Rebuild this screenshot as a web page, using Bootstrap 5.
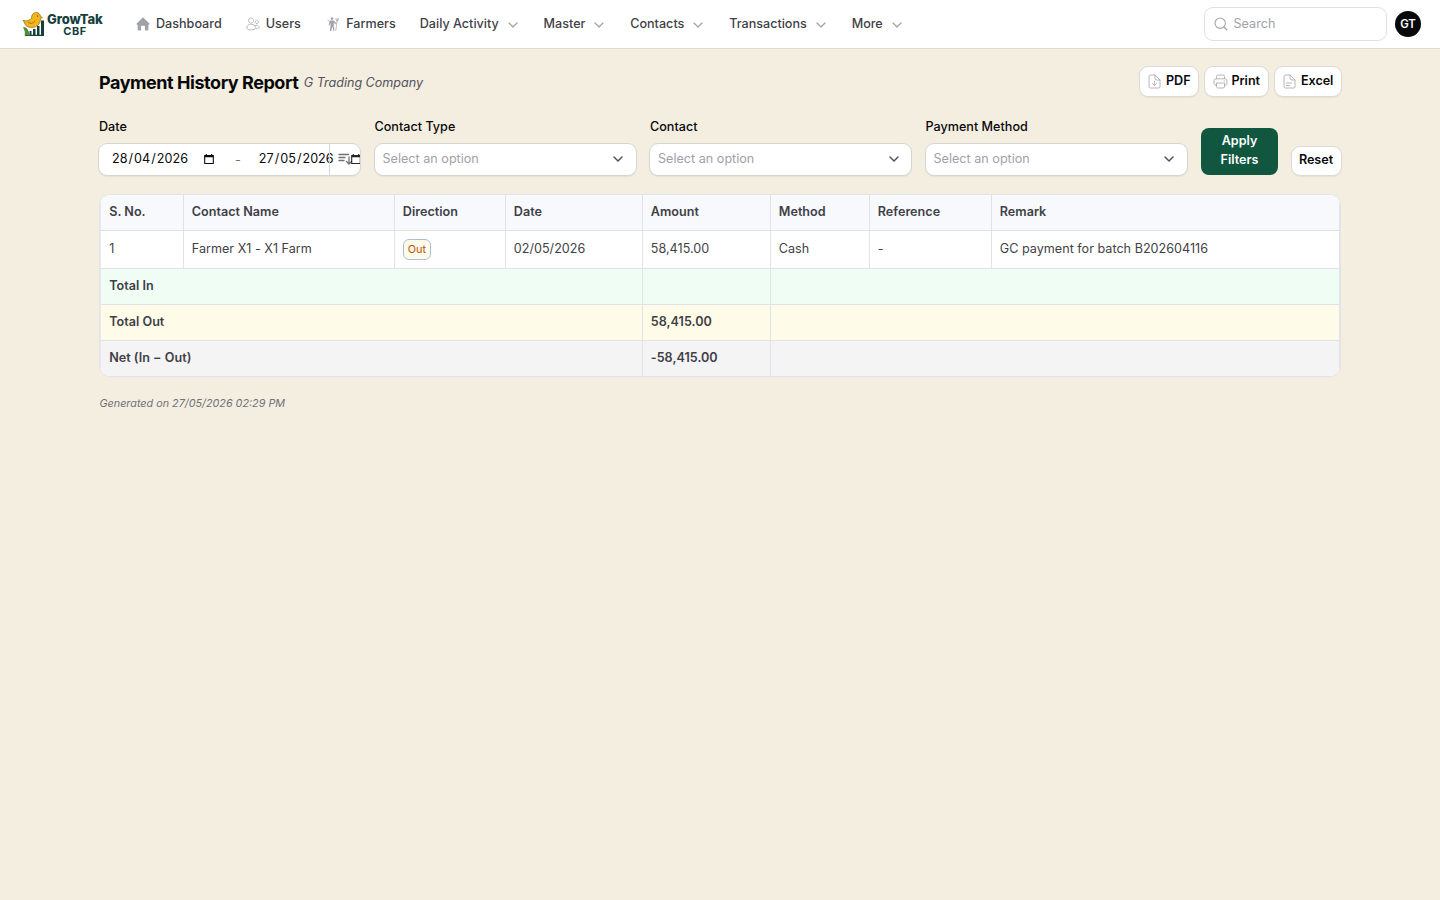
<!DOCTYPE html>
<html lang="en">
<head>
<meta charset="utf-8">
<meta name="viewport" content="width=device-width, initial-scale=1">
<title>Payment History Report</title>
<link href="https://cdn.jsdelivr.net/npm/bootstrap@5.3.0/dist/css/bootstrap.min.css" rel="stylesheet">
<style>
body{background:#f4eee0;font-family:Inter,"Liberation Sans",sans-serif;font-size:12.6px;line-height:18px;letter-spacing:.01px;color:#09090b}
svg{display:block;flex:none;fill:none;stroke:currentColor;stroke-width:1.5;stroke-linecap:round;stroke-linejoin:round}
.topbar{height:49px;background:#fff;border-bottom:1px solid #dfdbd0;padding:0 19px 0 22px}
.logo-mark{width:24px;height:28px;stroke:none}
.wordmark{color:#173f3e;font-weight:800;font-size:13px;line-height:13px;letter-spacing:-.12px;width:56px;margin:1px 0 0 1px}
.wordmark span{display:block;font-size:11px;line-height:11px;font-weight:700;letter-spacing:.5px;text-align:center}
.menu{margin-left:33px;gap:24px;color:#3f3f46;font-weight:500;letter-spacing:0}
.menu a{color:inherit;text-decoration:none;gap:6px;white-space:nowrap}
.menu svg{color:#a1a1aa}
.menu .drop{stroke-width:1.2;margin:1px 0 0 .8px}
.searchbox{width:183px;height:34px;border:1px solid #e1e1e4;border-radius:9px;padding:0 9px;gap:5.5px;color:#a1a1aa}
.avatar{width:26px;height:26px;background:#09090b;color:#fff;font-size:11.4px;font-weight:600;letter-spacing:0}
.page{width:1243px;margin:0 0 0 99px;padding-top:17px}
h1{font-size:18px;line-height:24px;font-weight:700;letter-spacing:-.45px}
.heading{padding-top:2px}
.company{color:#52525b;font-style:italic;letter-spacing:-.03px}
.tool{height:31px;border:1px solid #dcdad3;border-radius:9px;background:#fff;color:#09090b;font-size:12.6px;font-weight:600;line-height:18px;padding:0 7.6px 1px 7.5px;gap:3.8px;letter-spacing:-.02px;box-shadow:0 1px 1px #0000000d}
.tool svg{color:#a1a1aa}
.filters{margin:21px 0 0 -1px;gap:12.5px}
.field{width:263px}
.field label{font-weight:500;margin:0 0 7px 1px;display:block;line-height:18px}
.box{height:33px;border:1px solid #d6d6d0;border-radius:9px;background:#fff;box-shadow:0 1px 1px #0000000d}
.box>span{padding-bottom:2px}
.pick{padding:0 10.500px 0 8px;color:#a1a1aa}
.pick svg{color:#52525b;margin-bottom:1px}
.dates{overflow:hidden;padding-left:13px;position:relative}
.dates .day{width:77px;letter-spacing:.02px;white-space:nowrap}
.dates i{font-style:normal;padding:0 1px}
.sorter{position:absolute;right:0;top:0;bottom:0;width:31px;border-left:1px solid #d6d6d8;padding:0 0 2px 8px;color:#71717a}
.apply{width:77px;height:47px;border:0;border-radius:8px;background:#115740;color:#fff;font-weight:600;font-size:12.6px;line-height:19px;padding:0 0 3px;margin:0 0 1px 1px;letter-spacing:0}
.reset{width:51px;height:30px;padding:0 0 2px}
.report{margin:18px 0 0;width:1242px;border:1px solid #e2e4e8;border-radius:11px;overflow:hidden;background:#fff}
.report table{width:1240px;table-layout:fixed;border-collapse:separate;border-spacing:0;color:#3f3f46;margin:0}
.report td,.report th{height:36px;padding:0 8px 1px 7.8px;border-right:1px solid #dfe2e7;border-bottom:1px solid #dfe2e7}
.report th:first-child,.report td:first-child{padding-left:8.2px;border-left:1px solid #e6e8ec}
.report th,.sum td{font-weight:600}
.report tbody tr:last-child td{border-bottom:0;height:35px}
.report thead th{background:#f8f9fc}
.out{display:inline-block;font-size:10.8px;line-height:19px;height:21px;border:1px solid #a9bfdb;border-radius:6px;background:#fffbeb;color:#b45309;padding:0 4px;vertical-align:middle;letter-spacing:0}
.stamp{font-size:10.8px;color:#71717a;font-style:italic;margin:18px 0 0 .5px;letter-spacing:0}
</style>
</head>
<body>
<svg width="0" height="0" class="position-absolute"><defs>
<symbol id="down" viewBox="0 0 14 14"><path d="M3 5l4 4 4-4"/></symbol>
<symbol id="cal" viewBox="0 0 12 12"><path d="M1.700 2.500h8.600v8H1.700zM3.300 1v1M8.700 1v1" stroke-width="1.100" stroke-linecap="butt"/><path d="M1.700 3.200h8.600" stroke-width="2" stroke-linecap="butt"/></symbol>
</defs></svg>
<nav class="topbar d-flex align-items-center">
  <svg class="logo-mark" viewBox="0 0 24 28">
    <path fill="#173f3e" d="M7.500 21h2v4.500h-2zM11 19h2.500v6.500H11zM15 16h2.500v9.500H15zM19 10.500h3v15h-3zM3 24.800h19v1.200H3z"/><path fill="#4b8c3e" d="M1 17c4 0 6 3 6.500 8.500H2.500c1-3 0-5.500-1.500-8.500z"/>
    <path fill="#f3b51c" stroke="#8a6817" stroke-width=".7" d="M1.500 10.500c3 1 5.500 0 8-2 0-4 2-6 5-6 2 0 4 2 4 4l2 1-2 1c0 6-4 9-9 9-5 0-7-3-8-7z"/>
    <path stroke="#8a6817" stroke-width=".8" d="M6 12c2 2 5 2 7-1"/><circle cx="15.500" cy="6" r=".6" fill="#222"/>
  </svg>
  <div class="wordmark">GrowTak<span>CBF</span></div>
  <div class="menu d-flex align-items-center">
    <a href="#" class="d-flex align-items-center"><svg width="14" height="14" viewBox="0 0 14 14"><path fill="currentColor" stroke="none" d="M7 .6c.3 0 .5.1.7.3l5.600 5.700c.5.5.2 1.200-.5 1.200h-.5v4.700c0 .7-.4 1.100-1.100 1.100H9V9.300c0-.4-.2-.6-.6-.6H5.600c-.4 0-.6.200-.6.600v4.300H2.800c-.7 0-1.100-.4-1.100-1.100V7.800h-.5c-.7 0-1-.7-.5-1.200L6.300.9C6.500.7 6.700.6 7 .6z"/></svg>Dashboard</a>
    <a href="#" class="d-flex align-items-center"><svg width="14" height="14" viewBox="0 0 14 14"><g stroke-width=".8" stroke-dasharray="1.500 1"><circle cx="5" cy="3.500" r="2.500"/><circle cx="10.800" cy="5" r="1.700"/><path d="M.8 11c0-5 8.600-5 8.600 0 0 2.600-8.600 2.600-8.600 0zM9.200 8.500c2-.7 4.100.2 4.100 2.200-.9.700-1.700.9-3.300.9"/></g></svg><span>Users</span></a>
    <a href="#" class="d-flex align-items-center" style="margin-left:1.300px"><svg width="14" height="14" viewBox="0 0 14 14"><circle cx="6" cy="1.600" r="1.300" fill="currentColor" stroke="none"/><path stroke="none" fill="currentColor" d="M4 3.500h3.800l2 2.300.8.900-.6.600-2.300-1.500V9l.8 5H7.600L6.300 9.600 5.200 14H3.900l.6-5V6L3.400 8.400l-.8-.4z"/><path stroke-width=".7" d="M11.200 3L9.800 13.500M10 1.500v1.400c0 1 2 1 2.200 0l.2-1.400M11.300 1.500L11 4M2 3.500l2 1"/></svg>Farmers</a>
    <a href="#" class="d-flex align-items-center">Daily Activity<svg class="drop" width="14" height="14"><use href="#down"/></svg></a>
    <a href="#" class="d-flex align-items-center">Master<svg class="drop" width="14" height="14"><use href="#down"/></svg></a>
    <a href="#" class="d-flex align-items-center">Contacts<svg class="drop" width="14" height="14"><use href="#down"/></svg></a>
    <a href="#" class="d-flex align-items-center">Transactions<svg class="drop" width="14" height="14"><use href="#down"/></svg></a>
    <a href="#" class="d-flex align-items-center">More<svg class="drop" width="14" height="14"><use href="#down"/></svg></a>
  </div>
  <div class="searchbox d-flex align-items-center ms-auto"><svg width="14" height="14" viewBox="0 0 14 14"><circle cx="6.200" cy="6.200" r="5.200" stroke-width="1.100"/><path stroke-width="1.100" d="M10 10l3 3"/></svg>Search</div>
  <div class="avatar rounded-circle d-flex align-items-center justify-content-center ms-2">GT</div>
</nav>
<main class="page">
  <header class="d-flex justify-content-between">
    <div class="heading d-flex align-items-center"><h1 class="mb-0">Payment History Report</h1><span class="company" style="margin-left:5.500px">G Trading Company</span></div>
    <div class="d-flex" style="gap:5px">
      <button class="tool d-flex align-items-center"><svg width="15" height="15" viewBox="0 0 15 15"><path stroke-width=".8" stroke-dasharray="3 .8" d="M8 1H3.500Q2 1 2 2.500v10Q2 14 3.500 14h8q1.500 0 1.500-1.500V6L8 1v3q0 2 2 2h3M7.500 7v4.500M5.500 9.500l2 2 2-2"/></svg>PDF</button>
      <button class="tool d-flex align-items-center"><svg width="15" height="15" viewBox="0 0 15 15"><path stroke-width=".8" stroke-dasharray="3 .8" d="M3.500 4.500V2.500Q3.500 1 5 1h5q1.500 0 1.500 1.500v2M3.500 11.500Q1 11.500 1 9.500V7q0-2.200 2-2.200h9q2 0 2 2.200v2.500q0 2-2.500 2M3.500 9h8v3.500q0 1.500-1.500 1.500H5q-1.500 0-1.500-1.500zM11 7h.5"/></svg>Print</button>
      <button class="tool d-flex align-items-center"><svg width="15" height="15" viewBox="0 0 15 15"><path stroke-width=".8" stroke-dasharray="3 .8" d="M8 1H3.500Q2 1 2 2.500v10Q2 14 3.500 14h8q1.500 0 1.500-1.500V6L8 1v3q0 2 2 2h3M4.500 9h5M4.500 11.500h3"/></svg>Excel</button>
    </div>
  </header>
  <form class="filters d-flex align-items-end">
    <div class="field"><label>Date</label><div class="box dates d-flex align-items-center"><span class="day">28<i>/</i>04<i>/</i>2026</span><svg width="12" height="12" style="margin-left:14px;margin-bottom:1px"><use href="#cal"/></svg><span class="text-secondary" style="margin:0 18px 0 20px;padding:0">-</span><span class="day">27<i>/</i>05<i>/</i>2026</span><div class="sorter d-flex align-items-center"><svg width="15" height="14" viewBox="0 0 15 14"><path stroke-width="1.300" d="M1 2.500h9.500M1 5.500h6M1 8.500h5M11 5v7M8.500 9.500L11 12l2.500-2.500"/></svg><svg class="text-dark" width="12" height="12" style="margin-left:-3px"><use href="#cal"/></svg></div></div></div>
    <div class="field"><label>Contact Type</label><div class="box pick d-flex align-items-center justify-content-between"><span>Select an option</span><svg width="14" height="14"><use href="#down"/></svg></div></div>
    <div class="field"><label>Contact</label><div class="box pick d-flex align-items-center justify-content-between"><span>Select an option</span><svg width="14" height="14"><use href="#down"/></svg></div></div>
    <div class="field"><label>Payment Method</label><div class="box pick d-flex align-items-center justify-content-between"><span>Select an option</span><svg width="14" height="14"><use href="#down"/></svg></div></div>
    <button type="button" class="apply">Apply<br>Filters</button>
    <button type="button" class="tool reset">Reset</button>
  </form>
  <div class="report"><table>
    <colgroup><col style="width:84px"><col style="width:211px"><col style="width:111px"><col style="width:137px"><col style="width:128px"><col style="width:99px"><col style="width:122px"><col></colgroup>
    <thead><tr><th>S. No.</th><th>Contact Name</th><th>Direction</th><th>Date</th><th>Amount</th><th>Method</th><th>Reference</th><th>Remark</th></tr></thead>
    <tbody>
      <tr style="height:38px"><td>1</td><td>Farmer X1 - X1 Farm</td><td><span class="out">Out</span></td><td>02/05/2026</td><td>58,415.00</td><td>Cash</td><td>-</td><td>GC payment for batch B202604116</td></tr>
      <tr class="sum" style="background:#f0fdf4"><td colspan="4">Total In</td><td></td><td colspan="3"></td></tr>
      <tr class="sum" style="background:#fefce8"><td colspan="4">Total Out</td><td>58,415.00</td><td colspan="3"></td></tr>
      <tr class="sum" style="background:#f4f4f5"><td colspan="4">Net (In − Out)</td><td>-58,415.00</td><td colspan="3"></td></tr>
    </tbody>
  </table></div>
  <p class="stamp mb-0">Generated on 27/05/2026 02:29 PM</p>
</main>
<script src="https://cdn.jsdelivr.net/npm/bootstrap@5.3.0/dist/js/bootstrap.bundle.min.js"></script>
</body>
</html>
